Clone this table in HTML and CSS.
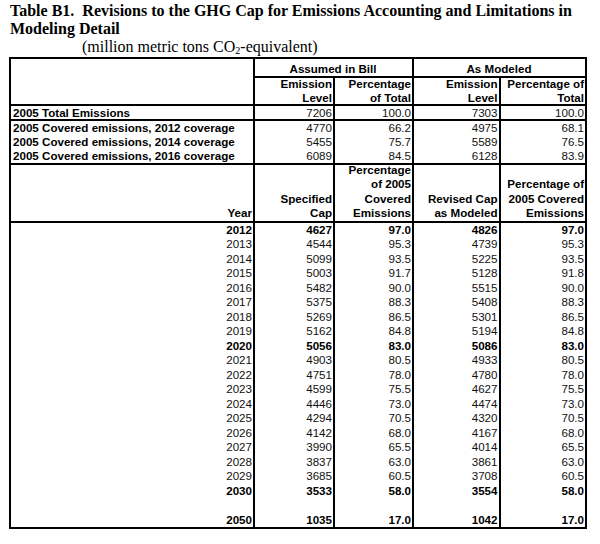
FILE: index.html
```html
<!DOCTYPE html>
<html>
<head>
<meta charset="utf-8">
<link rel="stylesheet" href="styles.css">
</head>
<body>
<div class="page">
  <h1 class="title">Table B1.&nbsp; Revisions to the GHG Cap for Emissions Accounting and Limitations in Modeling Detail</h1>
  <div class="subtitle">(million metric tons CO<sub>2</sub>-equivalent)</div>
  <table class="tbl">
    <colgroup>
      <col class="c1"><col class="c2"><col class="c3"><col class="c4"><col class="c5">
    </colgroup>
    <thead class="sec">
      <tr class="row-grp">
        <td rowspan="2" class="blank"></td>
        <th colspan="2" class="grp">Assumed in Bill</th>
        <th colspan="2" class="grp">As Modeled</th>
      </tr>
      <tr class="row-sub">
        <th><div class="hd hd2">Emission<br>Level</div></th>
        <th><div class="hd hd2">Percentage<br>of Total</div></th>
        <th><div class="hd hd2">Emission<br>Level</div></th>
        <th><div class="hd hd2">Percentage of<br>Total</div></th>
      </tr>
    </thead>
    <tbody class="sec row-total">
      <tr><td class="lab">2005 Total Emissions</td><td>7206</td><td>100.0</td><td>7303</td><td>100.0</td></tr>
    </tbody>
    <tbody class="sec row-cov">
      <tr><td class="lab">2005 Covered emissions, 2012 coverage</td><td>4770</td><td>66.2</td><td>4975</td><td>68.1</td></tr>
      <tr><td class="lab">2005 Covered emissions, 2014 coverage</td><td>5455</td><td>75.7</td><td>5589</td><td>76.5</td></tr>
      <tr><td class="lab">2005 Covered emissions, 2016 coverage</td><td>6089</td><td>84.5</td><td>6128</td><td>83.9</td></tr>
    </tbody>
    <tbody class="sec">
      <tr class="row-yhead">
        <th><div class="hd hd4">Year</div></th>
        <th><div class="hd hd4">Specified<br>Cap</div></th>
        <th><div class="hd hd4">Percentage<br>of 2005<br>Covered<br>Emissions</div></th>
        <th><div class="hd hd4">Revised Cap<br>as Modeled</div></th>
        <th><div class="hd hd4">Percentage of<br>2005 Covered<br>Emissions</div></th>
      </tr>
    </tbody>
    <tbody class="sec data">
      <tr class="b"><td>2012</td><td>4627</td><td>97.0</td><td>4826</td><td>97.0</td></tr>
      <tr><td>2013</td><td>4544</td><td>95.3</td><td>4739</td><td>95.3</td></tr>
      <tr><td>2014</td><td>5099</td><td>93.5</td><td>5225</td><td>93.5</td></tr>
      <tr><td>2015</td><td>5003</td><td>91.7</td><td>5128</td><td>91.8</td></tr>
      <tr><td>2016</td><td>5482</td><td>90.0</td><td>5515</td><td>90.0</td></tr>
      <tr><td>2017</td><td>5375</td><td>88.3</td><td>5408</td><td>88.3</td></tr>
      <tr><td>2018</td><td>5269</td><td>86.5</td><td>5301</td><td>86.5</td></tr>
      <tr><td>2019</td><td>5162</td><td>84.8</td><td>5194</td><td>84.8</td></tr>
      <tr class="b"><td>2020</td><td>5056</td><td>83.0</td><td>5086</td><td>83.0</td></tr>
      <tr><td>2021</td><td>4903</td><td>80.5</td><td>4933</td><td>80.5</td></tr>
      <tr><td>2022</td><td>4751</td><td>78.0</td><td>4780</td><td>78.0</td></tr>
      <tr><td>2023</td><td>4599</td><td>75.5</td><td>4627</td><td>75.5</td></tr>
      <tr><td>2024</td><td>4446</td><td>73.0</td><td>4474</td><td>73.0</td></tr>
      <tr><td>2025</td><td>4294</td><td>70.5</td><td>4320</td><td>70.5</td></tr>
      <tr><td>2026</td><td>4142</td><td>68.0</td><td>4167</td><td>68.0</td></tr>
      <tr><td>2027</td><td>3990</td><td>65.5</td><td>4014</td><td>65.5</td></tr>
      <tr><td>2028</td><td>3837</td><td>63.0</td><td>3861</td><td>63.0</td></tr>
      <tr><td>2029</td><td>3685</td><td>60.5</td><td>3708</td><td>60.5</td></tr>
      <tr class="b"><td>2030</td><td>3533</td><td>58.0</td><td>3554</td><td>58.0</td></tr>
      <tr><td>&nbsp;</td><td></td><td></td><td></td><td></td></tr>
      <tr class="b"><td>2050</td><td>1035</td><td>17.0</td><td>1042</td><td>17.0</td></tr>
    </tbody>
  </table>
</div>
</body>
</html>
```
FILE: styles.css
```css
html, body {
  margin: 0;
  padding: 0;
  background: #fff;
}

.page {
  padding: 2px 0 0 9px;
}

.title {
  margin: 0 0 0 1px;
  font: bold 16px/18px "Liberation Serif", "Times New Roman", serif;
  color: #000;
  width: 580px;
}

.subtitle {
  margin: 0 0 0 73px;
  font: 16px/18px "Liberation Serif", "Times New Roman", serif;
  color: #000;
}

.subtitle sub {
  font-size: 10px;
  line-height: 0;
  vertical-align: -2px;
}

.tbl {
  margin-top: 1px;
  border-collapse: collapse;
  table-layout: fixed;
  width: 576px;
  font: 11.6px/14.5px "Liberation Sans", Arial, sans-serif;
  color: #111;
}

.c1 { width: 244px; }
.c2 { width: 80px; }
.c3 { width: 79px; }
.c4 { width: 86.5px; }
.c5 { width: 86.5px; }

.tbl td, .tbl th {
  padding: 0 1px 0 0;
  border-left: 2px solid #000;
  border-right: 2px solid #000;
  text-align: right;
  vertical-align: bottom;
  white-space: nowrap;
  overflow: hidden;
}

.tbl th {
  font-weight: bold;
  color: #000;
  overflow: visible;
}

.sec {
  border-top: 2px solid #000;
  border-bottom: 2px solid #000;
}

.row-grp th {
  height: 17px;
  text-align: center;
  line-height: 14px;
  border-bottom: 2px solid #000;
}

.hd {
  display: flex;
  flex-direction: column;
  justify-content: flex-end;
  line-height: 14.5px;
}

.hd2 {
  height: 26px;
  line-height: 13.5px;
}

.hd4 { height: 55.5px; }

.row-total td {
  line-height: 13px;
}

.row-cov td {
  line-height: 14px;
}

.tbl td.lab {
  text-align: left;
  padding-left: 2px;
  font-weight: bold;
  color: #000;
}

.data tr.b td {
  font-weight: bold;
  color: #000;
}
```
